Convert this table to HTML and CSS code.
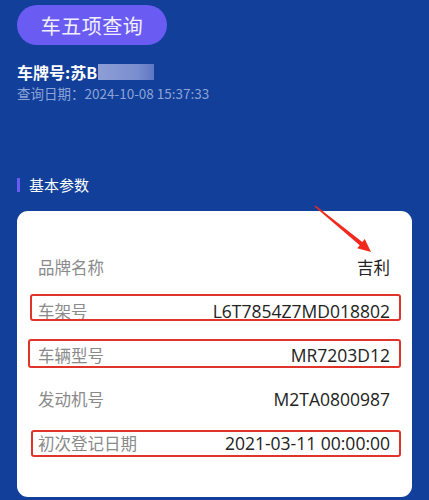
FILE: index.html
```html
<!DOCTYPE html>
<html lang="zh-CN">
<head>
<meta charset="utf-8">
<link rel="stylesheet" href="styles.css">
</head>
<body>
<div class="page">
  <div class="header">
    <div class="query-btn">车五项查询</div>
    <div class="plate">车牌号:苏B<span class="mask"></span></div>
    <div class="date">查询日期：2024-10-08 15:37:33</div>
  </div>
  <div class="section-title"><span class="bar"></span>基本参数</div>
  <div class="card">
    <div class="row"><span class="label">品牌名称</span><span class="value cjk">吉利</span></div>
    <div class="row"><span class="label">车架号</span><span class="value">L6T7854Z7MD018802</span><span class="mark m1"></span></div>
    <div class="row"><span class="label">车辆型号</span><span class="value">MR7203D12</span><span class="mark m2"></span></div>
    <div class="row"><span class="label">发动机号</span><span class="value">M2TA0800987</span></div>
    <div class="row"><span class="label">初次登记日期</span><span class="value">2021-03-11 00:00:00</span><span class="mark m3"></span></div>
  </div>
  <svg class="arrow" width="429" height="500" viewBox="0 0 429 500">
    <polygon points="314.5,206.6 315.5,205.4 362.3,242.1 364.8,239.1 371,252 357.2,248.3 359.7,245.2" fill="#f2281e"/>
  </svg>
</div>
</body>
</html>
```
FILE: styles.css
```css
* { box-sizing: border-box; }
html, body { margin: 0; padding: 0; }
body {
  background: #113f99;
  font-family: "Noto Sans CJK SC", "Noto Sans", sans-serif;
  width: 429px;
  height: 500px;
  overflow: hidden;
}
.page { position: relative; height: 500px; padding: 5px 17px 0 17px; }
.header { display: flex; flex-direction: column; align-items: flex-start; }
.query-btn {
  width: 150px;
  height: 40px;
  border-radius: 20px;
  background: #6a5cf2;
  color: #f1f0ff;
  font-size: 20px;
  display: flex;
  align-items: center;
  justify-content: center;
  letter-spacing: 0.5px;
}
.plate {
  margin-top: 16px;
  color: #ffffff;
  font-size: 16px;
  font-weight: 700;
  line-height: 22px;
  display: flex;
  align-items: center;
}
.mask {
  display: inline-block;
  width: 56px;
  height: 16px;
  background: linear-gradient(90deg, #8e9fd6, #7a8dcf 70%, #5e77c4);
  margin-left: 1px;
}
.date {
  color: #8ea4d8;
  font-size: 13.5px;
  line-height: 20px;
}
.section-title {
  margin-top: 72px;
  display: flex;
  align-items: center;
  color: #ffffff;
  font-size: 15px;
  line-height: 20px;
}
.bar { width: 3px; height: 14px; background: #6a5cf2; margin-right: 9px; }
.card {
  margin-top: 16px;
  background: #ffffff;
  border-radius: 11px;
  padding: 34px 22px 32px 21px;
}
.row {
  position: relative;
  height: 44px;
  display: flex;
  align-items: center;
  justify-content: space-between;
  font-size: 16.5px;
}
.label { color: #8a8a8a; }
.value { color: #222222; font-family: "Open Sans", "Noto Sans CJK SC", sans-serif; font-size: 17.5px; }
.value.cjk { font-family: "Noto Sans CJK SC", sans-serif; font-size: 16.5px; }
.mark {
  position: absolute;
  border: 2px solid #e0332c;
  border-radius: 3px;
}
.m1 { left: -8px; right: -11px; top: 5px; height: 27px; }
.m2 { left: -10px; right: -11px; top: 6px; height: 29px; }
.m3 { left: -7px; right: -11px; top: 9px; height: 27px; }
.arrow { position: absolute; left: 0; top: 0; pointer-events: none; }
```
